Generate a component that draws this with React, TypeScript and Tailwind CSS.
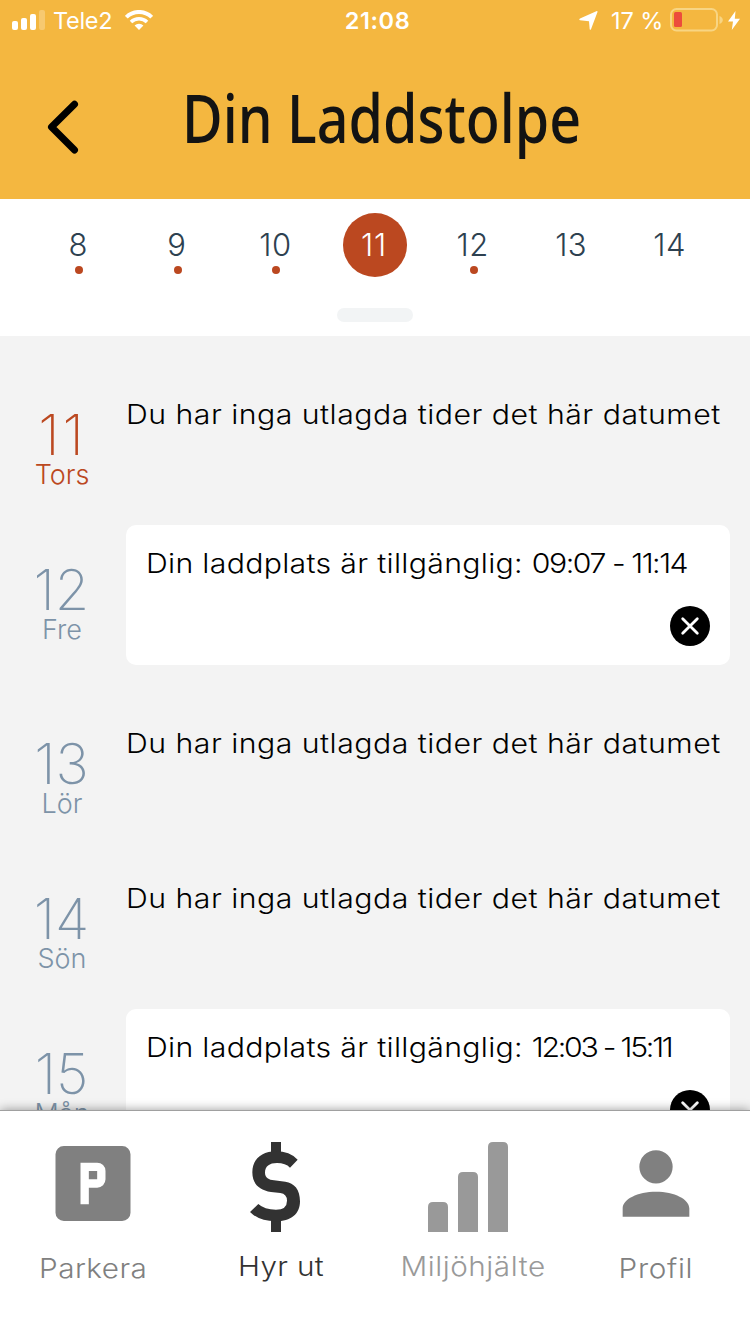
import React from "react";

type Slot = { day: string; label: string; text: string; time?: string; tight?: boolean; active?: boolean };

const EMPTY = "Du har inga utlagda tider det här datumet";
const FREE = "Din laddplats är tillgänglig:";

const slots: Slot[] = [
  { day: "11", label: "Tors", text: EMPTY, active: true },
  { day: "12", label: "Fre", text: FREE, time: "09:07 - 11:14" },
  { day: "13", label: "Lör", text: EMPTY },
  { day: "14", label: "Sön", text: EMPTY },
  { day: "15", label: "Mån", text: FREE, time: "12:03 - 15:11", tight: true },
];

const week = [
  { day: "8", dot: true },
  { day: "9", dot: true },
  { day: "10", dot: true },
  { day: "11", selected: true },
  { day: "12", dot: true },
  { day: "13" },
  { day: "14" },
];

function StatusBar() {
  return (
    <div className="grid h-10 grid-cols-3 items-center text-[24px] leading-none text-white">
      <div className="flex items-center pl-3">
        <svg width="34" height="20" viewBox="0 0 34 20" fill="white">
          <rect x="0" y="11" width="6" height="9" rx="2" />
          <rect x="9" y="8" width="6" height="12" rx="2" />
          <rect x="18" y="4" width="6" height="16" rx="2" />
          <rect x="27" y="0" width="6" height="20" rx="2" opacity="0.25" />
        </svg>
        <span className="ml-[7px] w-[72px] pt-[2px] text-[23.5px] tracking-[-0.3px]">Tele2</span>
        <svg width="28" height="20" viewBox="0 0 28 20" fill="none" stroke="white">
          <path d="M1.3 7.2a18 18 0 0 1 25.4 0" strokeWidth="4" />
          <path d="M6 12a11.6 11.6 0 0 1 16 0" strokeWidth="3.6" />
          <path d="M14 20l-4.4-4.4a6.4 6.4 0 0 1 8.8 0z" fill="white" stroke="none" />
        </svg>
      </div>
      <div className="pt-[2px] pl-[5px] text-center text-[23.5px] font-semibold tracking-[0.6px]">21:08</div>
      <div className="flex items-center justify-end pr-[10px]">
        <svg width="19" height="19" viewBox="0 0 19 19" fill="white">
          <path d="M18.5 1L12 18.200q-.7 1.200-1.300 0L10 10.200 1 9.300Q-.4 8.500 1 7.600L17.300.2q1.400-.5 1.200.8z" />
        </svg>
        <span className="ml-[13px] w-[59px] pt-[2px] text-[23.5px] tracking-[-0.1px] whitespace-nowrap">17 %</span>
        <svg width="54" height="24" viewBox="0 0 54 24">
          <rect x="1" y="1" width="46" height="21.5" rx="5.5" fill="none" stroke="#f8d583" strokeWidth="2" />
          <rect x="4" y="4" width="8" height="15" rx="1.5" fill="#ec4c3c" />
          <path d="M49.500 8q3.300 1.500 3.300 4t-3.300 4z" fill="#f8d583" />
        </svg>
        <svg className="ml-[4px]" width="12" height="19" viewBox="0 0 12 19" fill="white">
          <path d="M7.500 0L0 10.500h5L3.800 19 12 7.700H6.800z" />
        </svg>
      </div>
    </div>
  );
}

function DeleteButton() {
  return (
    <button className="mt-[22px] h-10 w-10 self-end" aria-label="Ta bort">
      <svg width="40" height="40" viewBox="0 0 40 40">
        <circle cx="20" cy="20" r="20" fill="black" />
        <path d="M12.700 12.700l14.600 14.600M27.300 12.700L12.700 27.300" stroke="white" strokeWidth="2.800" strokeLinecap="round" />
      </svg>
    </button>
  );
}

function DayRow({ slot }: { slot: Slot }) {
  return (
    <div className={slot.time ? "flex h-[174px] shrink-0" : "flex h-[155px] shrink-0"}>
      <div className={slot.active ? "w-[124px] pt-[37px] text-center text-[#bb4820]" : "w-[124px] pt-[37px] text-center text-[#7d93a8]"}>
        <div
          className={
            slot.active
              ? "h-14 pl-[1px] text-[56px] leading-[56px] font-extralight tracking-[3px]"
              : "h-14 pr-[1px] text-[56px] leading-[56px] font-extralight"
          }
        >
          {slot.day}
        </div>
        <div className="text-[27px] leading-6 font-light">{slot.label}</div>
      </div>
      {slot.time ? (
        <div className="ml-[2px] flex h-[140px] w-[604px] flex-col rounded-[10px] bg-white px-5 pt-[19px]">
          <p className="h-10 origin-left scale-x-[1.12] text-[27px] leading-10 font-light tracking-[0.28px] whitespace-nowrap text-black">
            {slot.text} <span className={slot.tight ? "tracking-[-2px]" : "tracking-[-1.3px]"}>{slot.time}</span>
          </p>
          <DeleteButton />
        </div>
      ) : (
        <p className="ml-[2px] w-[540px] origin-left scale-x-[1.12] pt-[25px] text-[27px] leading-10 font-light tracking-[0.43px] whitespace-nowrap text-black">
          {slot.text}
        </p>
      )}
    </div>
  );
}

export default function App() {
  return (
    <div className="flex h-[1334px] w-[750px] flex-col overflow-hidden bg-[#f3f3f3] font-['Inter','Liberation_Sans',sans-serif]">
      <header className="h-[199px] shrink-0 bg-[#f4b740]">
        <StatusBar />
        <div className="flex h-[159px] items-start">
          <button className="mt-[59px] ml-[46px] h-[56px] w-[36px]" aria-label="Tillbaka">
            <svg width="36" height="56" viewBox="0 0 36 56" fill="none" stroke="black" strokeWidth="7" strokeLinecap="round" strokeLinejoin="round">
              <path d="M28.500 5.200L5.500 28l23 23" />
            </svg>
          </button>
          <h1 className="mt-[37px] ml-[100px] origin-left scale-x-[0.83] font-['Noto_Sans','Open_Sans',sans-serif] text-[67px] leading-[80px] font-medium whitespace-nowrap text-[#131313]">
            Din Laddstolpe
          </h1>
        </div>
      </header>

      <section className="flex h-[137px] shrink-0 flex-col items-center bg-white pt-[14px]">
        <div className="grid w-[690px] grid-cols-7">
          {week.map((d) => (
            <div key={d.day} className="flex h-16 flex-col items-center">
              {d.selected ? (
                <div className="h-16 w-16 rounded-full bg-[#bb4820] pr-[2px] text-center text-[31px] leading-[64px] font-light tracking-[0.7px] text-white">
                  {d.day}
                </div>
              ) : (
                <div className="h-[53px] pr-[2px] text-[31px] leading-[64px] font-light tracking-[0.5px] text-[#2d4150]">{d.day}</div>
              )}
              {d.dot && <div className="h-2 w-2 rounded-full bg-[#bb4820]" />}
            </div>
          ))}
        </div>
        <div className="mt-[31px] h-[14px] w-[76px] rounded-[7px] bg-[#f2f4f5]" />
      </section>

      <main className="flex h-[774px] shrink-0 flex-col overflow-hidden pt-[34px]">
        {slots.map((s) => (
          <DayRow key={s.day} slot={s} />
        ))}
      </main>

      <nav className="z-10 flex h-[224px] shrink-0 border-t border-[#a0a0a0] bg-white text-[27px] leading-8 font-light shadow-[0_0_10px_rgba(0,0,0,0.4)]">
        <div className="flex w-[186px] flex-col items-center pt-[22px] text-[#808080]">
          <svg width="100" height="101" viewBox="0 0 24 24" fill="currentColor">
            <path d="M9 7v10h2v-4h2a2 2 0 0 0 2-2V9a2 2 0 0 0-2-2H9m2 2h2v2h-2V9M5 3h14a2 2 0 0 1 2 2v14a2 2 0 0 1-2 2H5a2 2 0 0 1-2-2V5a2 2 0 0 1 2-2z" />
          </svg>
          <span className="mt-[19px] scale-x-110 tracking-[0.4px]">Parkera</span>
        </div>
        <div className="flex w-[190px] flex-col items-center pt-[31px] text-[#323232]">
          <svg className="mr-[12px]" width="50" height="90" viewBox="0 0 150 270" fill="currentColor">
            <path d="M63 0h30v32H63zM63 234h30v36H63z" />
            <path d="M143 53L120 77Q107 63 81 63C58 63 45 73 45 92C45 108 57 113 72 115L106 119C133 123 150 142 150 178C150 216 123 238 77 238Q28 238 0 210L25 186Q43 203 78 203Q111 203 111 176Q111 156 91 153L63 150C28 145 7 126 7 91C7 51 36 28 78 28Q119 28 143 53z" />
          </svg>
          <span className="mt-[19px] scale-x-110 tracking-[0.3px]">Hyr ut</span>
        </div>
        <div className="flex w-[194px] flex-col items-center pt-[31px] text-[#999999]">
          <svg className="mr-[10px]" width="80" height="90" viewBox="0 0 80 90" fill="currentColor">
            <path d="M0 90V65q0-5 5-5h10q5 0 5 5v25zM30 90V35q0-5 5-5h10q5 0 5 5v55zM60 90V5q0-5 5-5h10q5 0 5 5v85z" />
          </svg>
          <span className="mt-[19px] scale-x-110 tracking-[0.5px]">Miljöhjälte</span>
        </div>
        <div className="flex w-[172px] flex-col items-center pt-[22px] text-[#808080]">
          <svg width="100" height="101" viewBox="0 0 24 24" fill="currentColor">
            <path d="M12 4a4 4 0 1 1 0 8 4 4 0 0 1 0-8m0 10c4.420 0 8 1.790 8 4v2H4v-2c0-2.210 3.580-4 8-4z" />
          </svg>
          <span className="mt-[19px] scale-x-110 tracking-[0.6px]">Profil</span>
        </div>
      </nav>
    </div>
  );
}
